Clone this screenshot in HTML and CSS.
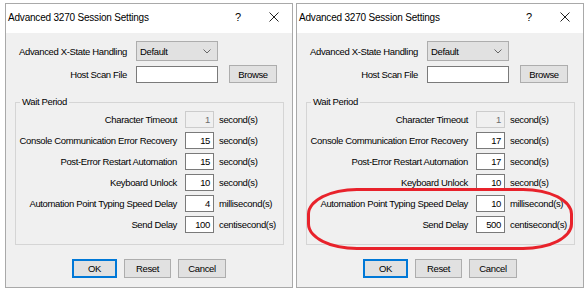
FILE: index.html
```html
<!DOCTYPE html>
<html lang="en">
<head>
  <meta charset="UTF-8" />
  <title>Advanced 3270 Session Settings</title>
  <link rel="stylesheet" href="styles.css">
</head>
<body>

  <!-- Before -->
  <div class="dialog">
    <div class="title-bar">
      <span class="title">Advanced 3270 Session Settings</span>
      <span class="help">?</span>
      <svg class="close" width="10" height="10" viewBox="0 0 10 10"><path d="M0.5 0.5 L9.5 9.5 M9.5 0.5 L0.5 9.5" stroke="#222" stroke-width="1" /></svg>
    </div>
    <div class="dialog-body">
      <div class="top-row">
        <label class="top-label">Advanced X-State Handling</label>
        <div class="select">
          <span>Default</span>
          <svg width="8" height="5" viewBox="0 0 8 5"><path d="M0.5 0.5 L4 4 L7.5 0.5" fill="none" stroke="#666" /></svg>
        </div>
      </div>
      <div class="top-row">
        <label class="top-label">Host Scan File</label>
        <div class="text-box"></div>
        <button class="btn browse">Browse</button>
      </div>

      <fieldset class="group">
        <legend>Wait Period</legend>
        <div class="wait-grid">
          <label>Character Timeout</label><div class="num disabled">1</div><span class="unit">second(s)</span>
          <label>Console Communication Error Recovery</label><div class="num">15</div><span class="unit">second(s)</span>
          <label>Post-Error Restart Automation</label><div class="num">15</div><span class="unit">second(s)</span>
          <label>Keyboard Unlock</label><div class="num">10</div><span class="unit">second(s)</span>
          <label>Automation Point Typing Speed Delay</label><div class="num">4</div><span class="unit">millisecond(s)</span>
          <label>Send Delay</label><div class="num">100</div><span class="unit">centisecond(s)</span>
        </div>
      </fieldset>

      <div class="buttons">
        <button class="btn ok">OK</button>
        <button class="btn reset">Reset</button>
        <button class="btn cancel">Cancel</button>
      </div>
    </div>
  </div>

  <!-- After -->
  <div class="dialog">
    <div class="title-bar">
      <span class="title">Advanced 3270 Session Settings</span>
      <span class="help">?</span>
      <svg class="close" width="10" height="10" viewBox="0 0 10 10"><path d="M0.5 0.5 L9.5 9.5 M9.5 0.5 L0.5 9.5" stroke="#222" stroke-width="1" /></svg>
    </div>
    <div class="dialog-body">
      <div class="top-row">
        <label class="top-label">Advanced X-State Handling</label>
        <div class="select">
          <span>Default</span>
          <svg width="8" height="5" viewBox="0 0 8 5"><path d="M0.5 0.5 L4 4 L7.5 0.5" fill="none" stroke="#666" /></svg>
        </div>
      </div>
      <div class="top-row">
        <label class="top-label">Host Scan File</label>
        <div class="text-box"></div>
        <button class="btn browse">Browse</button>
      </div>

      <fieldset class="group">
        <legend>Wait Period</legend>
        <div class="wait-grid">
          <label>Character Timeout</label><div class="num disabled">1</div><span class="unit">second(s)</span>
          <label>Console Communication Error Recovery</label><div class="num">17</div><span class="unit">second(s)</span>
          <label>Post-Error Restart Automation</label><div class="num">17</div><span class="unit">second(s)</span>
          <label>Keyboard Unlock</label><div class="num">10</div><span class="unit">second(s)</span>
          <label>Automation Point Typing Speed Delay</label><div class="num">10</div><span class="unit">millisecond(s)</span>
          <label>Send Delay</label><div class="num">500</div><span class="unit">centisecond(s)</span>
        </div>
      </fieldset>

      <div class="buttons">
        <button class="btn ok">OK</button>
        <button class="btn reset">Reset</button>
        <button class="btn cancel">Cancel</button>
      </div>
    </div>
    <!-- Highlight drawn over the changed rows -->
    <div class="highlight"></div>
  </div>

</body>
</html>
```

FILE: styles.css
```css
body {
  margin: 0;
  padding: 3px 0 0 5px;
  background: #ffffff;
  font-family: 'Liberation Sans', Arial, sans-serif;
  font-size: 9.5px;
  letter-spacing: -0.35px;
  color: #000000;
  white-space: nowrap;
  display: flex;
  gap: 3px;
}

.dialog {
  position: relative;
  width: 286px;
  height: 283px;
  border: 1px solid #a9a9a9;
  background-color: #f0f0f0;
  display: flex;
  flex-direction: column;
}

.title-bar {
  height: 29px;
  background-color: #ffffff;
  display: flex;
  align-items: center;
  padding: 0 0 3px 2px;
  box-sizing: border-box;
}

.title {
  flex: 1;
  font-size: 10px;
  letter-spacing: -0.2px;
}

.help {
  font-size: 11px;
  letter-spacing: 0;
  margin-right: 28px;
}

.close {
  margin-right: 13px;
}

.dialog-body {
  flex: 1;
  padding-top: 8px;
}

.top-row {
  display: flex;
  align-items: center;
  margin-bottom: 4px;
}

.top-label {
  width: 121px;
  text-align: right;
  margin-right: 9px;
}

.select {
  width: 82px;
  height: 20px;
  box-sizing: border-box;
  border: 1px solid #adadad;
  background-color: #e1e1e1;
  display: flex;
  align-items: center;
  justify-content: space-between;
  padding: 0 6px 0 3px;
}

.text-box {
  width: 82px;
  height: 17px;
  box-sizing: border-box;
  border: 1px solid #7a7a7a;
  background-color: #ffffff;
}

.btn {
  font-family: 'Liberation Sans', Arial, sans-serif;
  font-size: 9.5px;
  letter-spacing: -0.35px;
  color: #000000;
  background-color: #e1e1e1;
  border: 1px solid #adadad;
  padding: 0;
  height: 19px;
}

.browse {
  width: 48px;
  height: 18px;
  margin-left: 11px;
}

.group {
  margin: 13px 0 0 9px;
  width: 269px;
  box-sizing: border-box;
  border: 1px solid #d5d5d5;
  padding: 3px 0 11px 0;
}

.group legend {
  padding: 0 2px;
  margin-left: 4px;
  line-height: 12px;
}

.wait-grid {
  display: grid;
  grid-template-columns: 169px 29px auto;
  row-gap: 4px;
  align-items: center;
}

.wait-grid label {
  text-align: right;
  margin-right: 8px;
}

.num {
  height: 17px;
  box-sizing: border-box;
  border: 1px solid #7a7a7a;
  background-color: #ffffff;
  text-align: right;
  padding-right: 3px;
  line-height: 15px;
}

.num.disabled {
  border-color: #cccccc;
  background-color: #f0f0f0;
  color: #6d6d6d;
}

.unit {
  margin-left: 5px;
}

.buttons {
  display: flex;
  justify-content: center;
  gap: 7px;
  margin-top: 14px;
}

.ok {
  width: 45px;
  border: 2px solid #0078d7;
}

.reset {
  width: 47px;
}

.cancel {
  width: 48px;
}

.highlight {
  position: absolute;
  left: 10px;
  top: 184px;
  width: 260px;
  height: 56px;
  border: 3px solid #e8222b;
  border-radius: 50px / 26px;
  pointer-events: none;
}
```
